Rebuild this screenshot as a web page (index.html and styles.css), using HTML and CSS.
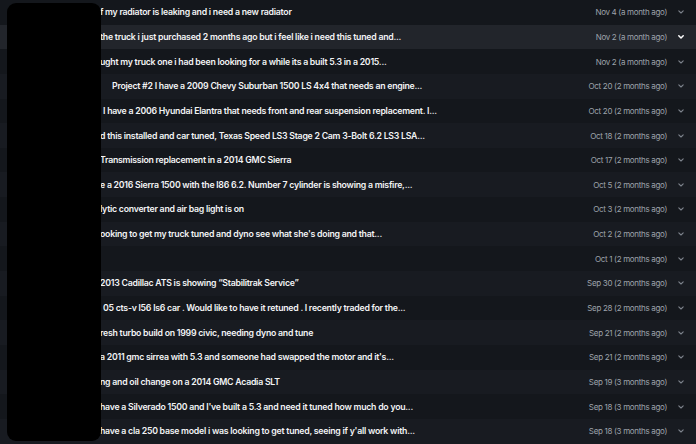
FILE: index.html
```html
<!DOCTYPE html>
<html>
<head>
<meta charset="utf-8">
<link rel="stylesheet" href="styles.css">
</head>
<body>
<div class="list">
  <div class="row"><span class="title">f my radiator is leaking and i need a new radiator</span><span class="date">Nov 4 (a month ago)</span><span class="chev"><svg viewBox="0 0 6 4"><path d="M0.8 0.8 L3 3 L5.2 0.8"/></svg></span></div>
  <div class="row active"><span class="title">the truck i just purchased 2 months ago but i feel like i need this tuned and...</span><span class="date">Nov 2 (a month ago)</span><span class="chev"><svg viewBox="0 0 6 4"><path d="M0.8 0.8 L3 3 L5.2 0.8"/></svg></span></div>
  <div class="row"><span class="title">ught my truck one i had been looking for a while its a built 5.3 in a 2015...</span><span class="date">Nov 2 (a month ago)</span><span class="chev"><svg viewBox="0 0 6 4"><path d="M0.8 0.8 L3 3 L5.2 0.8"/></svg></span></div>
  <div class="row"><span class="title off-12">Project #2 I have a 2009 Chevy Suburban 1500 LS 4x4 that needs an engine...</span><span class="date">Oct 20 (2 months ago)</span><span class="chev"><svg viewBox="0 0 6 4"><path d="M0.8 0.8 L3 3 L5.2 0.8"/></svg></span></div>
  <div class="row"><span class="title off-3">I have a 2006 Hyundai Elantra that needs front and rear suspension replacement. I...</span><span class="date">Oct 20 (2 months ago)</span><span class="chev"><svg viewBox="0 0 6 4"><path d="M0.8 0.8 L3 3 L5.2 0.8"/></svg></span></div>
  <div class="row"><span class="title">d this installed and car tuned, Texas Speed LS3 Stage 2 Cam 3-Bolt 6.2 LS3 LSA...</span><span class="date">Oct 18 (2 months ago)</span><span class="chev"><svg viewBox="0 0 6 4"><path d="M0.8 0.8 L3 3 L5.2 0.8"/></svg></span></div>
  <div class="row"><span class="title">Transmission replacement in a 2014 GMC Sierra</span><span class="date">Oct 17 (2 months ago)</span><span class="chev"><svg viewBox="0 0 6 4"><path d="M0.8 0.8 L3 3 L5.2 0.8"/></svg></span></div>
  <div class="row"><span class="title">e a 2016 Sierra 1500 with the l86 6.2. Number 7 cylinder is showing a misfire,...</span><span class="date">Oct 5 (2 months ago)</span><span class="chev"><svg viewBox="0 0 6 4"><path d="M0.8 0.8 L3 3 L5.2 0.8"/></svg></span></div>
  <div class="row"><span class="title">lytic converter and air bag light is on</span><span class="date">Oct 3 (2 months ago)</span><span class="chev"><svg viewBox="0 0 6 4"><path d="M0.8 0.8 L3 3 L5.2 0.8"/></svg></span></div>
  <div class="row"><span class="title">ooking to get my truck tuned and dyno see what she's doing and that...</span><span class="date">Oct 2 (2 months ago)</span><span class="chev"><svg viewBox="0 0 6 4"><path d="M0.8 0.8 L3 3 L5.2 0.8"/></svg></span></div>
  <div class="row"><span class="title"></span><span class="date">Oct 1 (2 months ago)</span><span class="chev"><svg viewBox="0 0 6 4"><path d="M0.8 0.8 L3 3 L5.2 0.8"/></svg></span></div>
  <div class="row"><span class="title">2013 Cadillac ATS is showing “Stabilitrak Service”</span><span class="date">Sep 30 (2 months ago)</span><span class="chev"><svg viewBox="0 0 6 4"><path d="M0.8 0.8 L3 3 L5.2 0.8"/></svg></span></div>
  <div class="row"><span class="title off-3">05 cts-v l56 ls6 car . Would like to have it retuned . I recently traded for the...</span><span class="date">Sep 28 (2 months ago)</span><span class="chev"><svg viewBox="0 0 6 4"><path d="M0.8 0.8 L3 3 L5.2 0.8"/></svg></span></div>
  <div class="row"><span class="title">resh turbo build on 1999 civic, needing dyno and tune</span><span class="date">Sep 21 (2 months ago)</span><span class="chev"><svg viewBox="0 0 6 4"><path d="M0.8 0.8 L3 3 L5.2 0.8"/></svg></span></div>
  <div class="row"><span class="title">a 2011 gmc sirrea with 5.3 and someone had swapped the motor and it's...</span><span class="date">Sep 21 (2 months ago)</span><span class="chev"><svg viewBox="0 0 6 4"><path d="M0.8 0.8 L3 3 L5.2 0.8"/></svg></span></div>
  <div class="row"><span class="title">ng and oil change on a 2014 GMC Acadia SLT</span><span class="date">Sep 19 (3 months ago)</span><span class="chev"><svg viewBox="0 0 6 4"><path d="M0.8 0.8 L3 3 L5.2 0.8"/></svg></span></div>
  <div class="row"><span class="title">have a Silverado 1500 and I've built a 5.3 and need it tuned how much do you...</span><span class="date">Sep 18 (3 months ago)</span><span class="chev"><svg viewBox="0 0 6 4"><path d="M0.8 0.8 L3 3 L5.2 0.8"/></svg></span></div>
  <div class="row"><span class="title">have a cla 250 base model i was looking to get tuned, seeing if y'all work with...</span><span class="date">Sep 18 (3 months ago)</span><span class="chev"><svg viewBox="0 0 6 4"><path d="M0.8 0.8 L3 3 L5.2 0.8"/></svg></span></div>
</div>
<div class="redact"></div>
</body>
</html>
```

FILE: styles.css
```css
html, body {
  margin: 0;
  padding: 0;
  background: #15181d;
  overflow: hidden;
}
body {
  width: 696px;
  height: 444px;
  position: relative;
  font-family: Inter, "Noto Sans", sans-serif;
}
.list {
  display: flex;
  flex-direction: column;
}
.row {
  height: 24.65px;
  display: flex;
  align-items: center;
  padding-left: 100px;
  padding-right: 12px;
}
.row:nth-child(odd) {
  background: #14171c;
}
.row:nth-child(even) {
  background: #181b21;
}
.row.active {
  background: #22252b;
}
.title {
  flex: 1;
  min-width: 0;
  white-space: nowrap;
  overflow: hidden;
  color: #f2f3f5;
  font-size: 8.75px;
  font-weight: 600;
  letter-spacing: -0.25px;
}
.title.off-12 { padding-left: 12px; }
.title.off-3 { padding-left: 3px; }
.date {
  color: #9ea3ab;
  font-size: 8px;
  font-weight: 400;
  letter-spacing: -0.32px;
  white-space: nowrap;
}
.chev {
  width: 6px;
  height: 4px;
  margin-left: 11px;
  display: flex;
}
.chev svg {
  width: 6px;
  height: 4px;
  fill: none;
  stroke: #7d838c;
  stroke-width: 1.1;
  stroke-linecap: round;
  stroke-linejoin: round;
}
.row.active .chev svg {
  stroke: #ffffff;
  stroke-width: 1.5;
}
.redact {
  position: absolute;
  left: 7px;
  top: 3px;
  width: 94px;
  height: 438px;
  background: #000000;
  border-radius: 9px;
}
```
